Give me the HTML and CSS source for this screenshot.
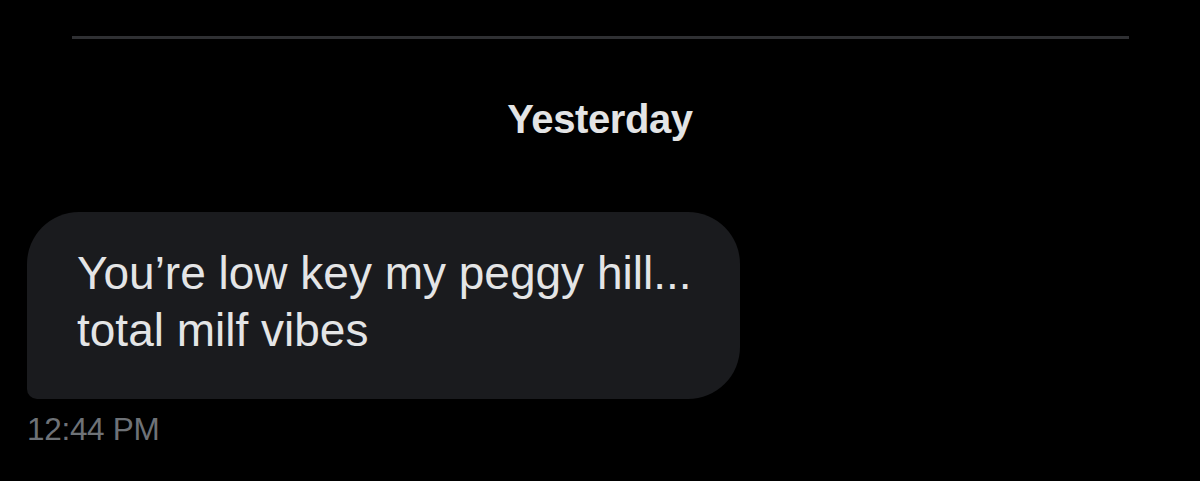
FILE: index.html
```html
<!DOCTYPE html>
<html lang="en">
<head>
<meta charset="utf-8">
<title>Messages</title>
<link rel="stylesheet" href="styles.css">
</head>
<body>
<div class="screen">
  <div class="divider"></div>
  <div class="day">Yesterday</div>
  <div class="message">
    <div class="bubble">You’re low key my peggy hill...<br>total milf vibes</div>
    <div class="time">12:44 PM</div>
  </div>
</div>
</body>
</html>
```

FILE: styles.css
```css
html, body {
  margin: 0;
  padding: 0;
  background: #000;
}
.screen {
  width: 1200px;
  height: 481px;
  overflow: hidden;
  font-family: "Liberation Sans", Arial, sans-serif;
  color: #e7e9ea;
  padding-top: 36px;
  box-sizing: border-box;
}
.divider {
  height: 3px;
  margin: 0 71px 0 72px;
  background: #2f3033;
}
.day {
  text-align: center;
  font-weight: 700;
  font-size: 40px;
  letter-spacing: -0.4px;
  line-height: 46px;
  margin-top: 57px;
  color: #e3e4e5;
}
.message {
  display: flex;
  flex-direction: column;
  align-items: flex-start;
  padding-left: 27px;
  margin-top: 70px;
}
.bubble {
  width: 713px;
  box-sizing: border-box;
  background: #1a1b1e;
  border-radius: 52px 52px 52px 10px;
  padding: 33px 20px 40px 50px;
  font-size: 46px;
  line-height: 57px;
  color: #e4e5e6;
}
.time {
  margin-top: 13px;
  margin-left: 0;
  font-size: 31.5px;
  line-height: 34px;
  letter-spacing: -0.3px;
  color: #6e7277;
}
```
